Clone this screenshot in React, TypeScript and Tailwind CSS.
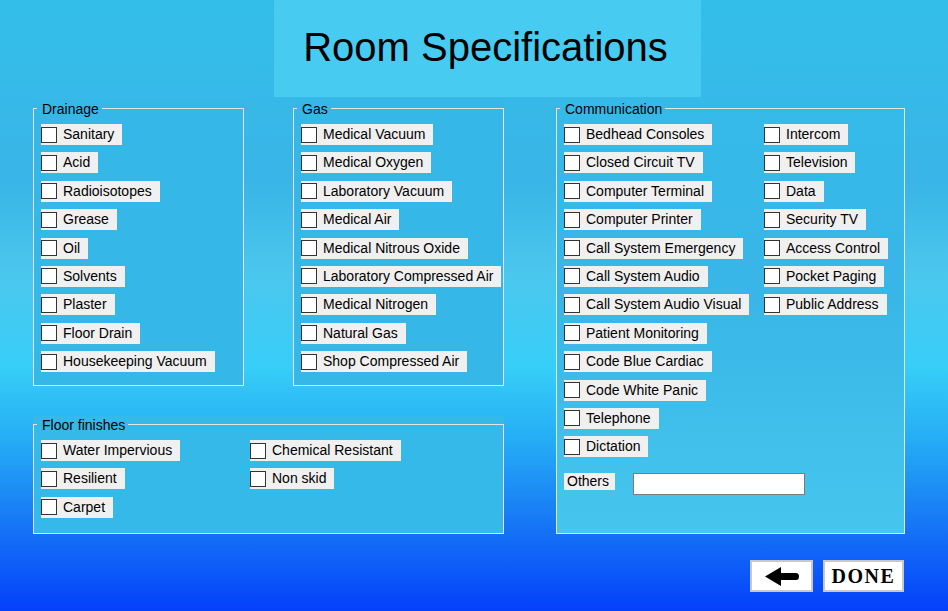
import type { ReactNode } from "react";

const drainage = [
  "Sanitary",
  "Acid",
  "Radioisotopes",
  "Grease",
  "Oil",
  "Solvents",
  "Plaster",
  "Floor Drain",
  "Housekeeping Vacuum",
];

const gas = [
  "Medical Vacuum",
  "Medical Oxygen",
  "Laboratory Vacuum",
  "Medical Air",
  "Medical Nitrous Oxide",
  "Laboratory Compressed Air",
  "Medical Nitrogen",
  "Natural Gas",
  "Shop Compressed Air",
];

const commLeft = [
  "Bedhead Consoles",
  "Closed Circuit TV",
  "Computer Terminal",
  "Computer Printer",
  "Call System Emergency",
  "Call System Audio",
  "Call System Audio Visual",
  "Patient Monitoring",
  "Code Blue Cardiac",
  "Code White Panic",
  "Telephone",
  "Dictation",
];

const commRight = [
  "Intercom",
  "Television",
  "Data",
  "Security TV",
  "Access Control",
  "Pocket Paging",
  "Public Address",
];

function Check({ label }: { label: string }) {
  return (
    <label className="flex h-[21px] w-fit items-center bg-[#f0f0f0] pr-[8px]">
      <input
        type="checkbox"
        className="h-[16px] w-[16px] appearance-none border border-[#333] bg-white"
      />
      <span className="ml-[6px] leading-[21px]">{label}</span>
    </label>
  );
}

function Group({
  title,
  className,
  children,
}: {
  title: string;
  className: string;
  children: ReactNode;
}) {
  return (
    <div className={className}>
      <fieldset className="h-full border border-[#e4e4e4] pl-[7px] pt-[7px]">
        <legend className="-ml-[4px] pl-[5px] pr-[3px] pt-[2px] leading-[15px]">
          {title}
        </legend>
        {children}
      </fieldset>
    </div>
  );
}

function List({ items }: { items: string[] }) {
  return (
    <div className="flex flex-col gap-[7.4px]">
      {items.map((i) => (
        <Check key={i} label={i} />
      ))}
    </div>
  );
}

export default function App() {
  return (
    <div className="h-[611px] w-[948px] overflow-hidden bg-[linear-gradient(180deg,#33bee9_0%,#39b5e6_30%,#4bc7ee_45%,#37cef7_60%,#25adf5_72%,#1676f6_86%,#0440fb_100%)] font-['Liberation_Sans',Arial,sans-serif] text-[14px] text-black">
      <header className="ml-[274px] flex h-[97px] w-[427px] items-center justify-center bg-[#47cbf0] pb-[3px] pr-[4px]">
        <h1 className="text-[40px] leading-[46px]">Room Specifications</h1>
      </header>

      <div className="mt-[3px] flex pl-[33px]">
        <div className="flex w-[471px] flex-col">
          <div className="flex gap-[49px]">
            <Group title="Drainage" className="h-[286px] w-[211px] bg-[#35b8e8]">
              <List items={drainage} />
            </Group>
            <Group title="Gas" className="h-[286px] w-[211px] bg-[#35b8e8]">
              <List items={gas} />
            </Group>
          </div>
          <Group
            title="Floor finishes"
            className="mt-[30px] h-[118px] w-[471px] bg-[#35b9e8]"
          >
            <div className="flex">
              <div className="w-[209px]">
                <List items={["Water Impervious", "Resilient", "Carpet"]} />
              </div>
              <List items={["Chemical Resistant", "Non skid"]} />
            </div>
          </Group>
        </div>

        <Group
          title="Communication"
          className="ml-[52px] h-[434px] w-[349px] bg-[linear-gradient(180deg,#34bae9_0%,#38b6e7_45%,#46c6ee_100%)]"
        >
          <div className="flex">
            <div className="w-[200px]">
              <List items={commLeft} />
            </div>
            <List items={commRight} />
          </div>
          <div className="mt-[16px] flex items-start">
            <span className="h-[17px] bg-[#f0f0f0] pl-[3px] pr-[6px] leading-[17px]">
              Others
            </span>
            <input
              type="text"
              className="ml-[18px] h-[22px] w-[172px] border border-[#7a7a7a] bg-white px-1 outline-none"
            />
          </div>
        </Group>
      </div>

      <div className="mt-[26px] flex justify-end gap-[10px] pr-[44px]">
        <button className="flex h-[32px] w-[63px] items-center justify-center border-2 border-[#c8c8c8] bg-white">
          <svg width="34" height="19" viewBox="0 0 34 19">
            <path
              d="M0 9.5 L16 0 L16 6 L31 6 Q34 6 34 9.5 Q34 13 31 13 L16 13 L16 19 Z"
              fill="#000"
            />
          </svg>
        </button>
        <button className="flex h-[32px] w-[81px] items-center justify-center border-2 border-[#c8c8c8] bg-white font-['Liberation_Serif',serif] text-[20px] font-bold tracking-[1.5px]">
          DONE
        </button>
      </div>
    </div>
  );
}
